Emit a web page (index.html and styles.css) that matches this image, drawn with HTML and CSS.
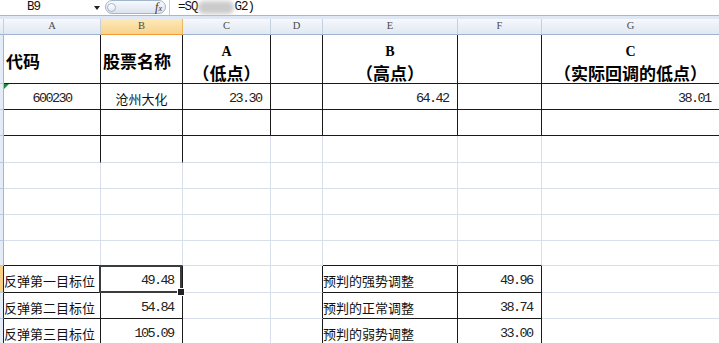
FILE: index.html
```html
<!DOCTYPE html>
<html lang="zh-CN">
<head>
<meta charset="utf-8">
<title>Sheet</title>
<link rel="stylesheet" href="styles.css">
</head>
<body>
<div class="fbar">
  <div class="namebox"><span class="ref">B9</span><span class="arrow"></span></div>
  <div class="pill"><span class="knob"></span><span class="fx">f<span class="fxs">x</span></span></div>
  <div class="sep"></div>
  <div class="formula"><span>=SQ</span><span class="blur"></span><span>G2)</span></div>
</div>
<div class="strip"></div>
<div class="sheet">
  <!-- header -->
  <div class="c hd corner"></div>
  <div class="c hd">A</div>
  <div class="c hd sel">B</div>
  <div class="c hd">C</div>
  <div class="c hd">D</div>
  <div class="c hd">E</div>
  <div class="c hd">F</div>
  <div class="c hd">G</div>
  <!-- row 1 -->
  <div class="c rh"></div>
  <div class="c r b L bold t1">代码</div>
  <div class="c r b L bold t1">股票名称</div>
  <div class="c r b stack"><span class="lat">A</span><span>（低点）</span></div>
  <div class="c r b"></div>
  <div class="c r b stack"><span class="lat">B</span><span>（高点）</span></div>
  <div class="c r b"></div>
  <div class="c b stack"><span class="lat">C</span><span>（实际回调的低点）</span></div>
  <!-- row 2 -->
  <div class="c rh"></div>
  <div class="c r b C num err">600230</div>
  <div class="c r b C">沧州大化</div>
  <div class="c r b R num">23.30</div>
  <div class="c r b"></div>
  <div class="c r b R num">64.42</div>
  <div class="c r b"></div>
  <div class="c b R num">38.01</div>
  <!-- row 3 -->
  <div class="c rh"></div>
  <div class="c r b"></div>
  <div class="c r b"></div>
  <div class="c r b"></div>
  <div class="c r b"></div>
  <div class="c r b"></div>
  <div class="c r b"></div>
  <div class="c b"></div>
  <!-- row 4 -->
  <div class="c rh"></div>
  <div class="c r"></div>
  <div class="c r"></div>
  <div class="c"></div>
  <div class="c"></div>
  <div class="c"></div>
  <div class="c"></div>
  <div class="c"></div>
  <!-- row 5 -->
  <div class="c rh"></div>
  <div class="c"></div><div class="c"></div><div class="c"></div><div class="c"></div><div class="c"></div><div class="c"></div><div class="c"></div>
  <!-- row 6 -->
  <div class="c rh"></div>
  <div class="c"></div><div class="c"></div><div class="c"></div><div class="c"></div><div class="c"></div><div class="c"></div><div class="c"></div>
  <!-- row 7 -->
  <div class="c rh"></div>
  <div class="c"></div><div class="c"></div><div class="c"></div><div class="c"></div><div class="c"></div><div class="c"></div><div class="c"></div>
  <!-- row 8 -->
  <div class="c rh"></div>
  <div class="c b"></div>
  <div class="c b"></div>
  <div class="c"></div>
  <div class="c"></div>
  <div class="c b"></div>
  <div class="c b"></div>
  <div class="c"></div>
  <!-- row 9 -->
  <div class="c rh rsel rdark"></div>
  <div class="c r b">反弹第一目标位</div>
  <div class="c r b R num active">49.48</div>
  <div class="c"></div>
  <div class="c r"></div>
  <div class="c r b">预判的强势调整</div>
  <div class="c r b R num">49.96</div>
  <div class="c"></div>
  <!-- row 10 -->
  <div class="c rh rdark"></div>
  <div class="c r b">反弹第二目标位</div>
  <div class="c r b R num">54.84</div>
  <div class="c"></div>
  <div class="c r"></div>
  <div class="c r b">预判的正常调整</div>
  <div class="c r b R num">38.74</div>
  <div class="c"></div>
  <!-- row 11 -->
  <div class="c rh rdark"></div>
  <div class="c r b">反弹第三目标位</div>
  <div class="c r b R num">105.09</div>
  <div class="c"></div>
  <div class="c r"></div>
  <div class="c r b">预判的弱势调整</div>
  <div class="c r b R num">33.00</div>
  <div class="c"></div>
</div>
</body>
</html>
```
FILE: styles.css
```css
* { box-sizing: border-box; }
html, body { margin: 0; padding: 0; background: #fff; }
body {
  width: 719px;
  height: 343px;
  overflow: hidden;
  font-family: "Noto Sans CJK SC", sans-serif;
  color: #111;
}

/* formula bar */
.fbar {
  display: flex;
  align-items: flex-start;
  height: 16px;
  border-bottom: 1px solid #a7b8cd;
  background: #fff;
}
.namebox {
  width: 103px;
  height: 15px;
  display: flex;
  align-items: center;
  padding-left: 27px;
  padding-right: 3px;
  font: 12.5px/15px "Liberation Mono", monospace;
  letter-spacing: -1px;
  color: #111;
}
.arrow {
  margin-left: auto;
  width: 0;
  height: 0;
  border-left: 3.5px solid transparent;
  border-right: 3.5px solid transparent;
  border-top: 4px solid #222;
}
.pill {
  width: 61px;
  height: 14px;
  margin: 0 0 0 2px;
  border: 1px solid #a3b5cc;
  border-radius: 7px;
  background: linear-gradient(#f7f9fc, #dae3ef);
  display: flex;
  align-items: center;
  padding: 0 3px 0 1px;
}
.knob {
  width: 9px;
  height: 9px;
  border-radius: 50%;
  border: 1px solid #a6b6ca;
  background: linear-gradient(#ffffff, #e3eaf3);
}
.fx {
  margin-left: auto;
  font: italic 12px/1 "Liberation Serif", serif;
  color: #333;
}
.fxs { font-size: 8px; }
.sep {
  width: 1px;
  height: 15px;
  background: #c3cfde;
  margin-left: 3px;
}
.formula {
  display: flex;
  align-items: center;
  height: 15px;
  padding-left: 8px;
  font: 12.5px/15px "Liberation Mono", monospace;
  letter-spacing: -1px;
  color: #111;
}
.blur {
  width: 36px;
  height: 13px;
  margin: 0 1px 0 0;
  background: #cbcbcb;
  border-radius: 6px;
  filter: blur(2px);
}
.strip {
  height: 3px;
  background: #dfe8f4;
}

/* sheet */
.sheet {
  display: grid;
  grid-template-columns: 4px 97px 82px 88px 52px 135px 84px 178px;
  grid-template-rows: 16px 49px 26px 26px 27px 26px 26px 26px 25px 27px 26px 26px;
}
.c {
  border-right: 1px solid #d8dfea;
  border-bottom: 1px solid #d8dfea;
  display: flex;
  align-items: center;
  padding-top: 3px;
  font-size: 13px;
  color: #111;
  white-space: nowrap;
  min-width: 0;
}
.hd {
  padding-top: 0;
  background: linear-gradient(#f6f8fc, #e0e8f3);
  border-right-color: #c3d0e0;
  border-bottom-color: #9eb3cc;
  justify-content: center;
  font: 10.5px/1 "Liberation Serif", serif;
  color: #4a4a4a;
}
.hd.sel {
  background: linear-gradient(#fde9b8, #f8d28e);
  border-right-color: #f1b459;
  border-bottom-color: #f29a35;
}
.rh {
  background: #e4ecf7;
  border-right-color: #9eb6ce;
  border-bottom-color: #b9cadc;
}
.rh.rsel { background: #f8cf84; }
.rh.rdark { border-right-color: #222; }

.r { border-right-color: #1a1a1a; }
.b { border-bottom-color: #1a1a1a; }

.L { padding-left: 2px; }
.C { justify-content: center; }
.R { justify-content: flex-end; padding-right: 8.5px; }

.bold { font-weight: 700; font-size: 17px; color: #000; }
.t1 { padding-top: 3px; }
.stack {
  flex-direction: column;
  justify-content: center;
  align-items: center;
  padding-top: 5px;
  font-weight: 700;
  font-size: 17px;
  line-height: 21px;
  color: #000;
}
.lat { font: 700 14px/21px "Liberation Serif", serif; }

.num {
  font-family: "Liberation Mono", monospace;
  font-size: 13.5px;
  letter-spacing: -1.6px;
  color: #222;
}

.err { position: relative; }
.err::before {
  content: "";
  position: absolute;
  left: 0;
  top: 0;
  width: 0;
  height: 0;
  border-top: 5px solid #1f8a3c;
  border-right: 5px solid transparent;
}

.active { position: relative; }
.active::after {
  content: "";
  position: absolute;
  top: -1px;
  left: -2px;
  right: 0;
  bottom: -1px;
  border: 2px solid #3c3c3c;
  z-index: 2;
}
.active::before {
  content: "";
  position: absolute;
  right: -3px;
  bottom: -4px;
  width: 6px;
  height: 6px;
  background: #222;
  border: 1px solid #fff;
  z-index: 3;
}
```
